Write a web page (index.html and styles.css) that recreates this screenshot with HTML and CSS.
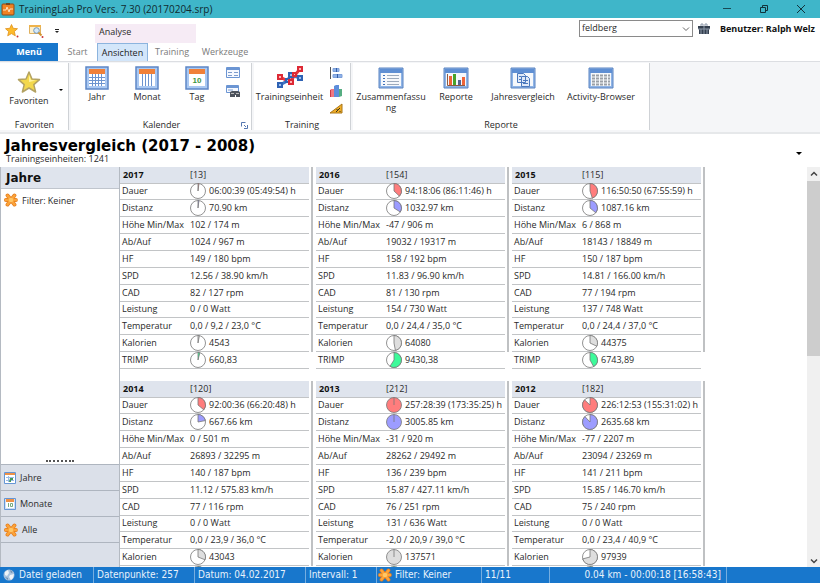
FILE: index.html
```html
<!DOCTYPE html>
<html lang="de">
<head>
<meta charset="utf-8">
<title>TrainingLab Pro</title>
<link rel="stylesheet" href="styles.css">
</head>
<body>
<svg class="defs" aria-hidden="true">
  <symbol id="star" viewBox="0 0 24 24"><path d="M12 2l3 7 7.500 .6-5.700 5 1.800 7.400-6.600-4-6.600 4 1.800-7.400-5.700-5L9 9z" fill="#f3d84c" stroke="#b3a263" stroke-width="1.500" stroke-linejoin="round"/><path d="M12 5l2 5 5 .6-7 1.400z" fill="#fff3a0"/></symbol>
  <symbol id="gear" viewBox="0 0 16 16"><path d="M8 8L4 2.800M8 8l4-5.200M8 8H2.200M8 8h5.600M8 8l-4 5.200M8 8l4 5.200" stroke="#e57b1c" stroke-width="4.400" stroke-linecap="round"/><path d="M8 8L4 2.800M8 8l4-5.200M8 8H2.200M8 8h5.600M8 8l-4 5.200M8 8l4 5.200" stroke="#fba43a" stroke-width="2.800" stroke-linecap="round"/><circle cx="8" cy="8" r="2.500" fill="#ffc766"/></symbol>
  <symbol id="cal" viewBox="0 0 24 24"><path d="M1 1h22v22H1z" fill="#a9c8f2" stroke="#5d86c6" stroke-width="1.500"/><path d="M4 8h16v12H4z" fill="#fff"/><path d="M4 3h16v5H4z" fill="#f08038"/></symbol>
  <symbol id="win" viewBox="0 0 26 22"><path d="M1 1h24v20H1z" fill="#8fb4e6" stroke="#5b84c2"/><path d="M2 2h22v4H2z" fill="#5f8fd3"/><path d="M3 6h20v13H3z" fill="#f6f8fb"/></symbol>
</svg>
<header class="titlebar">
  <svg class="i14" viewBox="0 0 14 14"><rect x="1" y="2" width="12" height="11" rx="1" fill="#f08223" stroke="#8f4a16"/><path d="M5 1h4v2H5z" fill="#734822"/><path d="M2 8h3l1-3 2 5 1-3h3" fill="none" stroke="#ffe3bd"/></svg>
  <span class="apptitle">TrainingLab Pro Vers. 7.30 (20170204.srp)</span>
  <button class="wbtn" aria-label="Minimieren"><svg class="i10" viewBox="0 0 10 10"><path d="M1 4.500h8" stroke="#174a55"/></svg></button>
  <button class="wbtn" aria-label="Wiederherstellen"><svg class="i10" viewBox="0 0 10 10"><path d="M1.500 3.500h5v5h-5zM3.500 3.500v-2h5v5h-2" fill="none" stroke="#12333b"/></svg></button>
  <button class="wbtn" aria-label="Schließen"><svg class="i10" viewBox="0 0 10 10"><path d="M1 1l8 8M9 1L1 9" stroke="#12333b"/></svg></button>
</header>
<div class="quick">
  <div class="qleft">
    <button aria-label="Favorit"><svg class="i14" viewBox="0 0 14 14"><path d="M6.500 .5l1.700 3.800 4.300 .4-3.200 2.800 1 4.300-3.800-2.200-3.800 2.200 1-4.300L.5 4.700l4.300-.4z" fill="#fdbb2b" stroke="#e0901c" stroke-width=".8"/><circle cx="12.500" cy="12.500" r="1" fill="#c33"/></svg></button>
    <button aria-label="Suchen"><svg class="i16" viewBox="0 0 16 14"><path d="M1.500 1.500h11v8h-11z" fill="#fdf0cd" stroke="#dfb160"/><path d="M1 1h12v2H1z" fill="#efb34b"/><circle cx="8.500" cy="6.500" r="2.800" fill="#d5e9f8" stroke="#6e96bd"/><path d="M10.500 8.500l3 3" stroke="#d29530" stroke-width="2"/><circle cx="14.500" cy="13" r="1" fill="#c33"/></svg></button>
    <button aria-label="Anpassen"><svg class="i8" viewBox="0 0 8 8"><path d="M2 2.500h4" stroke="#222"/><path d="M2 4h4L4 6z" fill="#222"/></svg></button>
  </div>
  <div class="context">Analyse</div>
  <div class="user">
    <div class="combo"><select aria-label="Suche"><option>feldberg</option></select><svg class="i8" viewBox="0 0 8 8"><path d="M1 2.500l3 3 3-3" fill="none" stroke="#666"/></svg></div>
    <svg class="i12 gift" viewBox="0 0 12 12"><path d="M0 3h12v3H0zM1 6h10v5H1z" fill="#35404f"/><path d="M3 3V1h2v2M7 3V1h2v2M3 6v5M6 3v8M9 6v5M0 6h12" stroke="#8e9aab" fill="none"/></svg>
    <b>Benutzer: Ralph Welz</b>
  </div>
</div>
<nav class="tabs">
  <button class="menu">Menü</button>
  <button class="tab start">Start</button>
  <button class="tab active">Ansichten</button>
  <button class="tab">Training</button>
  <button class="tab tools">Werkzeuge</button>
</nav>
<section class="ribbon">
  <div class="group gfav">
    <div class="items">
      <button class="big low"><svg class="i24"><use href="#star"/></svg><span>Favoriten</span></button>
      <button class="drop" aria-label="Favoriten auswählen"><svg class="i8" viewBox="0 0 8 8"><path d="M2 2h4L4 4z" fill="#000"/></svg></button>
    </div>
    <h2>Favoriten</h2>
  </div>
  <div class="group gcal">
    <div class="items">
      <button class="big"><svg class="i24" viewBox="0 0 24 24"><use href="#cal"/><path d="M4 11.500h16M4 14.500h16M4 17.500h16M7.500 8v12M10.500 8v12M13.500 8v12M16.500 8v12" stroke="#6c94cf"/></svg><span>Jahr</span></button>
      <button class="big"><svg class="i24" viewBox="0 0 24 24"><use href="#cal"/><path d="M7.500 8v12M10.500 8v12M13.500 8v12M16.500 8v12" stroke="#6c94cf"/></svg><span>Monat</span></button>
      <button class="big"><svg class="i24" viewBox="0 0 24 24"><use href="#cal"/><text x="12" y="17" class="ten">10</text></svg><span>Tag</span></button>
      <div class="stack">
        <button aria-label="Karte"><svg class="i14" viewBox="0 0 14 12"><path d="M.5.5h13v10H.5z" fill="#f6f9ff" stroke="#6b95d3"/><path d="M1 1h12v2H1z" fill="#6b95d3"/><path d="M2 5.500h4M8 5.500h4M2 8.500h4M8 8.500h4" stroke="#7e9ccc"/></svg></button>
        <button aria-label="Suchkarte"><svg class="i14" viewBox="0 0 14 12"><path d="M.5.500h12v7H.5z" fill="#f6f9ff" stroke="#6b95d3"/><path d="M1 1h11v2H1z" fill="#6b95d3"/><path d="M2 5h5" stroke="#7e9ccc"/><path d="M4 7l2-1h6l2 1v5h-4v-2H9v2H4z" fill="#4d535d"/><path d="M5 8.500h3M10 8.500h3" stroke="#bbb"/></svg></button>
      </div>
    </div>
    <h2>Kalender</h2>
    <svg class="launcher i8" viewBox="0 0 8 8"><path d="M1.500 5.500v-4h4M4 4l2 2M7.500 4v3.500H4" fill="none" stroke="#5577b0"/></svg>
  </div>
  <div class="group gtrain">
    <div class="items">
      <button class="big"><svg class="i26" viewBox="0 0 26 24"><path d="M3 19l7-4 4-6 9 3" fill="none" stroke="#4075c4" stroke-width="3"/><path d="M3 11l10 5 5-7 5-6" fill="none" stroke="#e8363f" stroke-width="3"/><g fill="#9cc0ef" stroke="#2e62b4" stroke-width="2"><path d="M1 17h4v4H1zM9 13h3v3H9zM12 7h4v4h-4zM21 10h4v4h-4z"/></g><g fill="#ffb5b5" stroke="#dd2935" stroke-width="2"><path d="M1 9h4v4H1zM12 14h4v4h-4zM16 7h3v3h-3zM21 1h4v4h-4z"/></g></svg><span>Trainingseinheit</span></button>
      <div class="stack">
        <button aria-label="Verteilung"><svg class="i14" viewBox="0 0 14 12"><path d="M1.500 0v12" stroke="#555"/><path d="M4 1.500h6v3H4zM4 7.500h9v3H4z" fill="#8fb2e8" stroke="#7da0da"/><path d="M7.500 1v4M8.500 7v4" stroke="#345ea6"/></svg></button>
        <button aria-label="Diagramm"><svg class="i14" viewBox="0 0 14 12"><path d="M1 5l2-1v8H1z" fill="#c83b4a"/><path d="M2 4h3v8H2z" fill="#f07882"/><path d="M5 1l2-1h3v12H5z" fill="#5d8edb"/><path d="M10 4h3v7l-3 1z" fill="#55ad81"/></svg></button>
        <button aria-label="Steigung"><svg class="i14" viewBox="0 0 14 12"><path d="M1 10L13 1v9z" fill="#f0ad25" stroke="#a9761b"/><path d="M7 9l4-4M8 6v1M11 8v1" stroke="#35301d"/></svg></button>
      </div>
    </div>
    <h2>Training</h2>
  </div>
  <div class="group grep">
    <div class="items">
      <button class="big wide"><svg class="i26" viewBox="0 0 26 22"><use href="#win"/><path d="M5 8.500h2M5 11.500h2M5 14.500h2M5 17.500h2" stroke="#3e70ba"/><path d="M9 8.500h12M9 11.500h12M9 14.500h12M9 17.500h12" stroke="#9caabc"/></svg><span>Zusammenfassu<br>ng</span></button>
      <button class="big rep"><svg class="i26" viewBox="0 0 26 22"><use href="#win"/><path d="M4.500 7v11.500H22" stroke="#8b5b42" fill="none"/><path d="M6 9h3v9H6z" fill="#ef6437"/><path d="M10 7h3v11h-3z" fill="#47a32b"/><path d="M15 13h3v5h-3z" fill="#53648f"/><path d="M19 10h3v8h-3z" fill="#ef6437"/></svg><span>Reporte</span></button>
      <button class="big cmp"><svg class="i26" viewBox="0 0 26 22"><use href="#win"/><path d="M7.500 6.500h6l2 2v7h-8zM11.500 9.500h6l2 2v8h-8z" fill="#dfe9f8" stroke="#4b78bd"/><path d="M13 13.500h5M13 16.500h5M9 9.500h2M9 12.500h2" stroke="#4b78bd"/></svg><span>Jahresvergleich</span></button>
      <button class="big act"><svg class="i26" viewBox="0 0 26 22"><use href="#win"/><path d="M4 8.500h18M4 11.500h18M4 14.500h18M4 17.500h18" stroke="#9a9fa6" stroke-width="2" stroke-dasharray="3 1"/></svg><span>Activity-Browser</span></button>
    </div>
    <h2>Reporte</h2>
  </div>
</section>
<div class="heading">
  <div><h1>Jahresvergleich (2017 - 2008)</h1><p>Trainingseinheiten: 1241</p></div>
  <button aria-label="Zeitraum"><svg class="i8" viewBox="0 0 8 8"><path d="M1 3h6L4 6z" fill="#000"/></svg></button>
</div>
<div class="body">
  <aside>
    <h2>Jahre</h2>
    <a class="filter" href="#filter"><svg class="i14"><use href="#gear"/></svg>Filter: Keiner</a>
    <div class="grip"></div>
    <nav>
      <a href="#jahre"><svg class="i12" viewBox="0 0 12 12"><path d="M.5.500h11v11H.5z" fill="#fff" stroke="#6596d5"/><path d="M1 1h10v2H1z" fill="#ee9147"/><path d="M2 5.500h8M2 8.500h8M4.500 4v6" stroke="#9bbce6"/><path d="M6 6h3v2H7v2H5z" fill="#44985a"/></svg>Jahre</a>
      <a href="#monate"><svg class="i12" viewBox="0 0 12 12"><path d="M.5.500h11v11H.5z" fill="#cfe0f6" stroke="#6596d5"/><path d="M2 4h8v6H2z" fill="#fff"/><path d="M2 1h8v3H2z" fill="#ee9147"/><path d="M4.500 5v4M6.500 5.500h2v3h-2z" fill="none" stroke="#78ab80"/></svg>Monate</a>
      <a href="#alle"><svg class="i14"><use href="#gear"/></svg>Alle</a>
      <div class="rest"></div>
    </nav>
  </aside>
  <main id="years"></main>
  <div class="scroll">
    <svg class="i8" viewBox="0 0 8 8"><path d="M1 5.500l3-3 3 3" fill="none" stroke="#444" stroke-width="1.500"/></svg>
    <div class="track"><div class="thumb"></div></div>
    <svg class="i8" viewBox="0 0 8 8"><path d="M1 2.500l3 3 3-3" fill="none" stroke="#444" stroke-width="1.500"/></svg>
  </div>
</div>
<footer>
  <span><svg class="i12" viewBox="0 0 12 12"><circle cx="6" cy="6" r="5.500" fill="#a8c3df"/><path d="M2 3l3-2 1 3-2 3-2-1zM7 6l4-1-1 4-2 2-2-3z" fill="#eef4f8"/><path d="M7 1l3 2-2 1zM2 8l3 1v2z" fill="#6f8faf"/></svg>Datei geladen</span>
  <span>Datenpunkte: 257</span>
  <span>Datum: 04.02.2017</span>
  <span>Intervall: 1</span>
  <span class="fi"><svg class="i14"><use href="#gear"/></svg>Filter: Keiner</span>
  <span>11/11</span>
  <span class="last">0.04 km - 00:00:18 [16:58:43]</span>
</footer>
<script src="app.js"></script>
</body>
</html>
```
FILE: styles.css
```css
* { box-sizing: border-box; }
html, body { height: 100%; }
body {
  margin: 0;
  display: flex;
  flex-direction: column;
  overflow: hidden;
  background: #fff;
  color: #2a2a2a;
  font: 9px/12px "Open Sans", "Noto Sans", sans-serif;
}
h1, h2, p { margin: 0; }
button { border: 0; padding: 0; background: none; font: inherit; color: inherit; }
a { color: inherit; text-decoration: none; }
svg { display: block; flex: none; }
.defs { position: absolute; width: 0; height: 0; }
.i8 { width: 8px; height: 8px; }
.i10 { width: 10px; height: 10px; }
.i12 { width: 12px; height: 12px; }
.i14 { width: 14px; height: 14px; }
.i16 { width: 16px; height: 14px; }
.i24 { width: 24px; height: 24px; }
.i26 { width: 26px; height: 24px; }

.titlebar { height: 18px; flex: none; display: flex; align-items: center; padding: 0 1px; background: #3fb6c9; }
.apptitle { flex: 1; margin-left: 4px; font-size: 10px; color: #102a30; }
.wbtn { width: 37px; display: flex; justify-content: center; }

.quick { height: 25px; flex: none; display: flex; }
.qleft { width: 95px; display: flex; align-items: center; gap: 9px; padding: 0 5px; }
.context { width: 101px; margin-top: 6px; padding: 2px 4px; background: #f6ebf5; }
.user { flex: 1; display: flex; align-items: center; justify-content: flex-end; gap: 5px; padding: 0 5px 4px; }
.combo { position: relative; }
.combo select { display: block; width: 114px; height: 17px; padding: 0 2px 1px; border: 1px solid #8a8a8a; border-radius: 0; background: #fff; font: inherit; color: inherit; appearance: none; }
.combo svg { position: absolute; right: 3px; top: 5px; pointer-events: none; }
.user b { margin-left: 5px; color: #111; }

.tabs { height: 18px; flex: none; display: flex; line-height: 16px; }
.menu { width: 58px; background: #1877cc; color: #fff; font-weight: bold; }
.tab { width: 48px; color: #7a7a7a; border: 1px solid transparent; }
.tab.start { width: 39px; }
.tab.active { width: 51px; background: #d3e6fa; border-color: #8cb4de; border-bottom: 0; color: #222; }
.tab.tools { width: 58px; }

.ribbon { height: 73px; flex: none; display: flex; gap: 2px; padding: 1px 0 2px; background: #f5f6f8; border-top: 1px solid #dcdee2; border-bottom: 2px solid #e6e8ea; line-height: 11px; }
.group { position: relative; display: flex; flex-direction: column; background: #fff; border-right: 1px solid #cfd2d6; }
.group h2 { font: inherit; text-align: center; }
.items { flex: 1; display: flex; }
.big { display: flex; flex-direction: column; align-items: center; gap: 1px; width: 50px; padding-top: 3px; align-self: flex-start; }
.big.low { padding-top: 7px; width: 56px; }
.drop { width: 8px; }
.gfav { width: 69px; padding-left: 1px; }
.gcal { width: 181px; padding-left: 1px; }
.gtrain { width: 97px; }
.grep { width: 297px; }
.launcher { position: absolute; right: 3px; bottom: 1px; }
.stack { display: flex; flex-direction: column; gap: 6px; padding: 4px 4px; }
.stack .i14 { height: 12px; }
.gtrain .big { width: 71px; }
.ten { font: bold 8px "Liberation Sans", sans-serif; fill: #3a9540; text-anchor: middle; }
.wide { width: 76px; }
.rep { width: 54px; }
.cmp { width: 80px; }
.act { width: 76px; }

.heading { height: 33px; flex: none; display: flex; justify-content: space-between; align-items: flex-start; padding: 3px 17px 0 5px; }
.heading h1 { font: bold 15px/18px "DejaVu Sans", sans-serif; color: #000; }
.heading p { line-height: 8px; padding-left: 1px; }
.heading button { margin-top: 12px; }

.body { flex: 1; min-height: 0; display: flex; }
aside { width: 120px; flex: none; display: flex; flex-direction: column; border: 1px solid #b4bac2; border-width: 0 1px; }
aside h2 { padding: 3px 5px 1px; background: #dfe4ed; border-bottom: 1px solid #c0c5cd; font: bold 12px/17px "DejaVu Sans", sans-serif; color: #111; }
.filter { flex: 1; display: flex; align-items: flex-start; gap: 4px; padding: 4px 3px; line-height: 15px; }
.grip { height: 4px; margin: 0 45px; border-top: 2px dotted #555; }
aside nav { background: #dbe0e9; }
aside nav a { height: 26px; display: flex; align-items: center; gap: 4px; padding-left: 3px; border-top: 1px solid #aeb5bf; }
.rest { height: 25px; border-top: 1px solid #aeb5bf; }

main { flex: 1; min-width: 0; overflow: hidden; display: grid; grid-template-columns: repeat(auto-fill, 196px); grid-auto-rows: max-content; gap: 12px 0; max-width: 640px; }
.card { display: flex; }
.card::after { content: ""; width: 2px; margin: 0 3px 17px 2px; background: #bfc1c3; }
table { width: 189px; height: 202px; border-collapse: collapse; table-layout: fixed; }
th, td { padding: 0 0 0 2px; height: 16px; border-bottom: 1px solid #c2c4c6; text-align: left; font-weight: normal; white-space: nowrap; line-height: 12px; vertical-align: middle; }
thead th { background: #dfe4ed; }
thead th:first-child { width: 68px; font-weight: bold; color: #111; padding-left: 3px; }
td div { display: flex; align-items: center; gap: 3px; height: 15px; }
.pie { width: 16px; height: 16px; overflow: visible; }

.scroll { width: 13px; flex: none; margin-left: auto; display: flex; flex-direction: column; align-items: center; gap: 3px; padding: 3px 0 2px; background: #f0f0f0; }
.track { flex: 1; width: 100%; }
.thumb { height: 47%; background: #cdcdcd; }

footer { height: 16px; flex: none; display: grid; grid-template-columns: 94px 101px 111px 71px 105px 68px 177px; background: #1877cc; color: #e8f2fb; font: 10px/14px "DejaVu Sans Condensed", "Noto Sans", sans-serif; }
footer span { display: flex; align-items: center; gap: 4px; padding-left: 3px; border-right: 1px solid #76aee0; white-space: nowrap; }
footer .fi { padding-left: 1px; gap: 3px; }
footer .last { justify-content: flex-end; padding-right: 5px; }
```
FILE: app.js
```js
const labels = ["Dauer", "Distanz", "Höhe Min/Max", "Ab/Auf", "HF", "SPD", "CAD", "Leistung", "Temperatur", "Kalorien", "TRIMP"];
const colors = { Dauer: "#ff7d7d", Distanz: "#9c9cff", Kalorien: "#dedede", TRIMP: "#3dfa9a" };

const years = [
  { year: 2017, count: 13, share: [0.02, 0.02, 0.03, 0.04],
    values: ["06:00:39 (05:49:54) h", "70.90 km", "102 / 174 m", "1024 / 967 m", "149 / 180 bpm", "12.56 / 38.90 km/h", "82 / 127 rpm", "0 / 0 Watt", "0,0 / 9,2 / 23,0 °C", "4543", "660,83"] },
  { year: 2016, count: 154, share: [0.37, 0.34, 0.47, 0.59],
    values: ["94:18:06 (86:11:46) h", "1032.97 km", "-47 / 906 m", "19032 / 19317 m", "158 / 192 bpm", "11.83 / 96.90 km/h", "81 / 130 rpm", "154 / 730 Watt", "0,0 / 24,4 / 35,0 °C", "64080", "9430,38"] },
  { year: 2015, count: 115, share: [0.45, 0.36, 0.32, 0.42],
    values: ["116:50:50 (67:55:59) h", "1087.16 km", "6 / 868 m", "18143 / 18849 m", "150 / 187 bpm", "14.81 / 166.00 km/h", "77 / 194 rpm", "137 / 748 Watt", "0,0 / 24,4 / 37,0 °C", "44375", "6743,89"] },
  { year: 2014, count: 120, share: [0.36, 0.22, 0.31, 0.4],
    values: ["92:00:36 (66:20:48) h", "667.66 km", "0 / 501 m", "26893 / 32295 m", "140 / 187 bpm", "11.12 / 575.83 km/h", "77 / 116 rpm", "0 / 0 Watt", "0,0 / 23,9 / 36,0 °C", "43043"] },
  { year: 2013, count: 212, share: [1, 1, 1, 1],
    values: ["257:28:39 (173:35:25) h", "3005.85 km", "-31 / 920 m", "28262 / 29492 m", "136 / 239 bpm", "15.87 / 427.11 km/h", "76 / 251 rpm", "131 / 636 Watt", "-2,0 / 20,9 / 39,0 °C", "137571"] },
  { year: 2012, count: 182, share: [0.87, 0.88, 0.71, 0.8],
    values: ["226:12:53 (155:31:02) h", "2635.68 km", "-77 / 2207 m", "23094 / 23269 m", "141 / 211 bpm", "15.85 / 146.70 km/h", "75 / 240 rpm", "0 / 0 Watt", "0,0 / 23,4 / 40,9 °C", "97939"] }
];

// Pie of the year's share of the best year, clockwise from twelve o'clock.
function pie(share, color) {
  const angle = share * 2 * Math.PI;
  const x = 8 + 7.5 * Math.sin(angle);
  const y = 8 - 7.5 * Math.cos(angle);
  const large = share > 0.5 ? 1 : 0;
  const full = share >= 1;
  const slice = full ? "M8 8V.5" : `M8 8V.5A7.5 7.5 0 ${large} 1 ${x} ${y}z`;
  return `<svg class="pie" viewBox="0 0 16 16"><circle cx="8" cy="8" r="7.5" fill="${full ? color : "#fff"}" stroke="#777" stroke-width=".8"/><path d="${slice}" fill="${color}" stroke="#777" stroke-width=".8"/></svg>`;
}

document.getElementById("years").innerHTML = years.map(entry => {
  let next = 0;
  const rows = labels.map((label, i) => {
    const chart = colors[label] ? pie(entry.share[next++], colors[label]) : "";
    const value = entry.values[i];
    return `<tr><th scope="row">${value ? label : ""}</th><td><div>${chart}${value || ""}</div></td></tr>`;
  }).join("");
  return `<div class="card"><table><thead><tr><th>${entry.year}</th><th>[${entry.count}]</th></tr></thead><tbody>${rows}</tbody></table></div>`;
}).join("");
```
